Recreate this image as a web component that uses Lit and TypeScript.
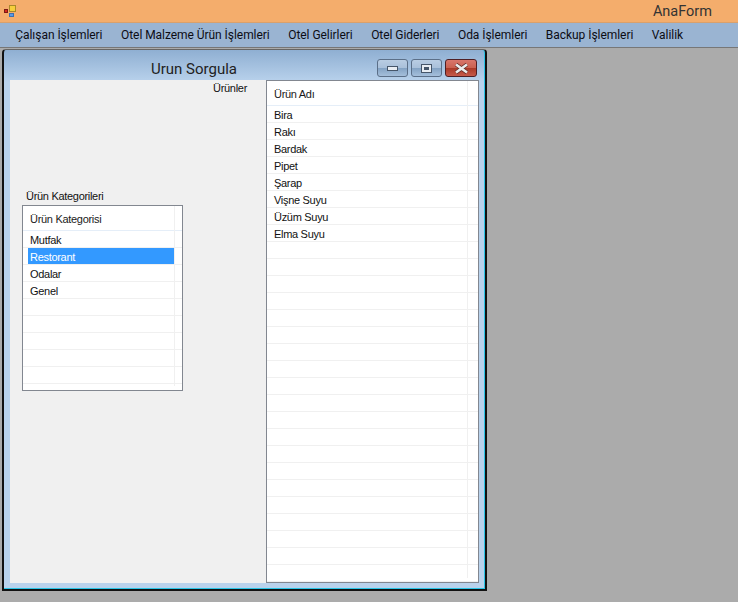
import { LitElement, css, html, svg } from 'lit';
import { customElement, property } from 'lit/decorators.js';

const MENU = [
  'Çalışan İşlemleri',
  'Otel Malzeme Ürün İşlemleri',
  'Otel Gelirleri',
  'Otel Giderleri',
  'Oda İşlemleri',
  'Backup İşlemleri',
  'Valilik',
];

const CATEGORIES = ['Mutfak', 'Restorant', 'Odalar', 'Genel'];
const PRODUCTS = ['Bira', 'Rakı', 'Bardak', 'Pipet', 'Şarap', 'Vişne Suyu', 'Üzüm Suyu', 'Elma Suyu'];

@customElement('list-view')
class ListView extends LitElement {
  static styles = css`
    :host {
      display: block;
      box-sizing: border-box;
      border: 1px solid #828790;
      background: #fff;
      overflow: hidden;
      position: relative;
    }

    .head {
      height: 25px;
      box-sizing: border-box;
      padding: 1px 0 0 7px;
      line-height: 24px;
      border-bottom: 1px solid #e5eef8;
      color: #1a1a1a;
    }

    .row {
      height: 17px;
      box-sizing: border-box;
      border-bottom: 1px solid #f0f0f0;
      line-height: 18px;
      padding-left: 7px;
      color: #111;
    }

    .row span {
      display: block;
      height: 16px;
      margin-left: -2px;
      padding-left: 2px;
    }

    .row .sel {
      background: #3399ff;
      color: #fff;
    }

    .sep {
      position: absolute;
      top: 0;
      bottom: 4px;
      width: 1px;
      background: #f0f0f0;
    }
  `;

  @property({ type: Array }) items: string[] = [];
  @property() title = '';
  @property() selected = '';
  @property({ type: Number }) rows = 0;
  @property({ type: Number }) col = 0;

  render() {
    const blanks = Array.from({ length: Math.max(0, this.rows - this.items.length) }, () => '');
    const all = [...this.items, ...blanks];
    return html`
      <div class="head">${this.title}</div>
      ${all.map(
        (t) => html`<div class="row">
          <span class=${t !== '' && t === this.selected ? 'sel' : ''} style="width:${this.col - 6}px">${t}</span>
        </div>`,
      )}
      <div class="sep" style="left:${this.col}px"></div>
    `;
  }
}

@customElement('app-root')
class AppRoot extends LitElement {
  static styles = css`
    :host {
      display: flex;
      flex-direction: column;
      width: 738px;
      height: 602px;
      overflow: hidden;
      background: #ababab;
      font-family: 'Liberation Sans', Arial, sans-serif;
      font-size: 11px;
      letter-spacing: -0.3px;
      position: relative;
    }

    .titlebar {
      height: 22px;
      background: #f4ad6c;
      border-bottom: 1px solid #d9a06c;
      display: flex;
      align-items: center;
      justify-content: space-between;
      padding: 0 26px 0 3px;
      flex: none;
    }

    .titlebar svg {
      display: block;
    }

    .apptitle {
      font-family: Roboto, sans-serif;
      font-size: 14.5px;
      letter-spacing: 0;
      color: #333;
    }

    .menubar {
      height: 24px;
      background: #9ab4d2;
      border-bottom: 1px solid #777;
      display: flex;
      align-items: center;
      padding-left: 6px;
      flex: none;
      color: #0c0c14;
      font-family: Roboto, sans-serif;
      font-size: 12px;
      letter-spacing: -0.05px;
    }

    .menubar span {
      padding: 0 9.25px;
    }

    .mdi {
      flex: 1;
      position: relative;
    }

    .window {
      position: absolute;
      left: 2px;
      top: 1px;
      width: 485px;
      height: 542px;
      box-sizing: border-box;
      border: 2px solid #111;
      border-top: 1px solid #666;
      border-radius: 4px 4px 0 0;
      background: linear-gradient(#8fafd2 0, #b9d2ec 32px, #b9d2ec 100%);
      display: flex;
      flex-direction: column;
      padding: 0 6px 6px 6px;
      box-shadow: inset 0 -1px 0 #29c4e6, inset -1px 0 0 #29c4e6;
    }

    .caption {
      height: 30px;
      flex: none;
      display: flex;
      align-items: center;
    }

    .caption-text {
      font-family: Roboto, sans-serif;
      font-size: 15px;
      letter-spacing: 0;
      color: #222;
      margin-left: 141px;
      margin-top: 7px;
    }

    .controls {
      margin-left: auto;
      display: flex;
      gap: 3px;
      margin-right: 2px;
      margin-top: 6px;
    }

    .ctl {
      width: 31px;
      height: 18px;
      box-sizing: border-box;
      border: 1px solid #5b6f88;
      border-radius: 3px;
      background: linear-gradient(#b9cde3 0, #a9c0da 50%, #84a3c4 52%, #a5bfdb 100%);
      display: flex;
      align-items: center;
      justify-content: center;
    }

    .ctl.close {
      width: 32px;
      border-color: #4e1f25;
      background: linear-gradient(#d9766b 0, #c9604f 50%, #ab3a28 52%, #c65a4a 100%);
    }

    .client {
      flex: 1;
      background: #f0f0f0;
      display: flex;
      min-height: 0;
    }

    .left {
      width: 256px;
      flex: none;
      display: flex;
      flex-direction: column;
    }

    .lbl-products {
      align-self: flex-end;
      margin-right: 19px;
      line-height: 16px;
      color: #111;
    }

    .lbl-categories {
      margin: 92px 0 1px 16px;
      line-height: 16px;
      color: #111;
    }

    .cat-list {
      margin-left: 12px;
      width: 161px;
      height: 186px;
    }

    .prod-list {
      width: 213px;
      height: 503px;
      flex: none;
    }
  `;

  private icon() {
    return svg`<svg width="14" height="14" viewBox="0 0 14 14">
      <rect x="6.5" y="1.5" width="6" height="6" fill="#f6cf3c" stroke="#a88a2a"/>
      <rect x="1.5" y="5.5" width="3" height="3" fill="#d9281e" stroke="#7c1a14"/>
      <rect x="6.5" y="9.5" width="4" height="3" fill="#5a9ae6" stroke="#3c6fb0"/>
    </svg>`;
  }

  render() {
    return html`
      <div class="titlebar">
        ${this.icon()}
        <span class="apptitle">AnaForm</span>
      </div>
      <div class="menubar">${MENU.map((m) => html`<span>${m}</span>`)}</div>
      <div class="mdi">
        <div class="window">
          <div class="caption">
            <span class="caption-text">Urun Sorgula</span>
            <div class="controls">
              <div class="ctl">
                <svg width="11" height="5"><rect x="0.5" y="0.5" width="10" height="4" fill="#e8edf3" stroke="#46566a"/></svg>
              </div>
              <div class="ctl">
                <svg width="11" height="9"><rect x="0.5" y="0.5" width="10" height="8" fill="#e8edf3" stroke="#46566a"/><rect x="3" y="3" width="5" height="3" fill="#46566a"/></svg>
              </div>
              <div class="ctl close">
                <svg width="17" height="11">
                  <path d="M3 1.5 L14 9.5 M14 1.5 L3 9.5" fill="none" stroke="#5c2a26" stroke-width="4"/>
                  <path d="M3 1.5 L14 9.5 M14 1.5 L3 9.5" fill="none" stroke="#ececec" stroke-width="2.6"/>
                </svg>
              </div>
            </div>
          </div>
          <div class="client">
            <div class="left">
              <div class="lbl-products">Ürünler</div>
              <div class="lbl-categories">Ürün Kategorileri</div>
              <list-view
                class="cat-list"
                title="Ürün Kategorisi"
                .items=${CATEGORIES}
                selected="Restorant"
                rows="9"
                col="151"
              ></list-view>
            </div>
            <list-view class="prod-list" title="Ürün Adı" .items=${PRODUCTS} rows="28" col="200"></list-view>
          </div>
        </div>
      </div>
    `;
  }
}
